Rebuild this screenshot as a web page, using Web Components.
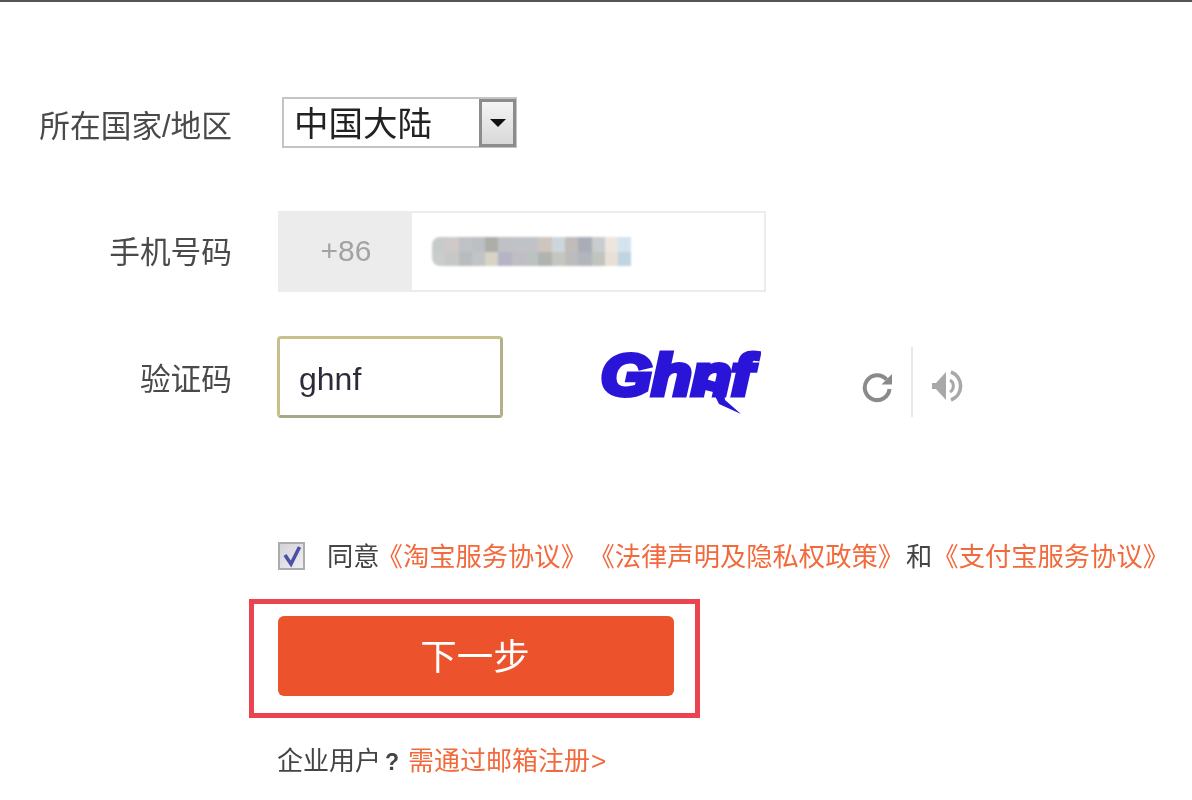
<!DOCTYPE html>
<html lang="zh">
<head>
<meta charset="utf-8">
<title>注册</title>
<style>
  html, body { margin: 0; padding: 0; background: #fff; }
  body {
    font-family: "Liberation Sans", "Noto Sans CJK SC", sans-serif;
    color: #444;
    height: 800px;
    overflow: hidden;
  }
</style>
</head>
<body>
<signup-page>
  <form-row label="所在国家/地区" top="95" height="51" shift="2"><country-select value="中国大陆"></country-select></form-row>
  <form-row label="手机号码" top="63" height="81" shift="-5"><phone-field code="+86"></phone-field></form-row>
  <form-row label="验证码" top="44" height="82" shift="-1"><captcha-field value="ghnf"></captcha-field></form-row>
  <agree-line></agree-line>
  <next-button>下一步</next-button>
  <company-link></company-link>
</signup-page>

<script>
// page frame, the dark line on top is part of the crop
class SignupPage extends HTMLElement {
    constructor() {
        super();
        this.attachShadow({ mode: 'open' });
        this.shadowRoot.innerHTML = `
            <style>
                :host {
                    display: block;
                    border-top: 2px solid #555;
                    filter: blur(0.45px);
                }
            </style>
            <slot></slot>
        `;
    }
}

class FormRow extends HTMLElement {
    constructor() {
        super();
        this.attachShadow({ mode: 'open' });
    }

    connectedCallback() {
        const top = this.getAttribute('top') || 0;
        const height = this.getAttribute('height') || 50;
        const shift = Number(this.getAttribute('shift') || 0);
        this.shadowRoot.innerHTML = `
            <style>
                :host {
                    display: flex;
                    align-items: center;
                    gap: 45px;
                    margin-top: ${top}px;
                    height: ${height}px;
                }
                .label {
                    width: 232px;
                    flex: none;
                    text-align: right;
                    font-size: 30.7px;
                    color: #4a4a4a;
                    white-space: nowrap;
                    padding-top: ${Math.max(shift, 0)}px;
                    padding-bottom: ${Math.max(-shift, 0)}px;
                }
            </style>
            <div class="label">${this.getAttribute('label')}</div>
            <slot></slot>
        `;
    }
}

class CountrySelect extends HTMLElement {
    constructor() {
        super();
        this.attachShadow({ mode: 'open' });
    }

    connectedCallback() {
        this.shadowRoot.innerHTML = `
            <style>
                :host {
                    display: flex;
                    box-sizing: border-box;
                    width: 235px;
                    height: 51px;
                    margin-left: 5px;
                    border: 2px solid #c4c4c4;
                    background: #fff;
                }
                .value {
                    flex: 1;
                    padding-left: 10px;
                    padding-top: 2px;
                    font-size: 34.5px;
                    line-height: 47px;
                    height: 45px;
                    color: #222;
                }
                .arrow {
                    width: 37px;
                    flex: none;
                    margin: 0 -1px -1px 0;
                    box-sizing: border-box;
                    border: 3px solid #8c8c8c;
                    background: linear-gradient(#f4f4f4, #d8d8d8);
                    display: flex;
                    align-items: center;
                    justify-content: center;
                }
                .arrow i {
                    border: 8px solid transparent;
                    border-top: 8px solid #111;
                    border-bottom: 0;
                }
            </style>
            <div class="value">${this.getAttribute('value')}</div>
            <div class="arrow"><i></i></div>
        `;
    }
}

class PhoneField extends HTMLElement {
    constructor() {
        super();
        this.attachShadow({ mode: 'open' });
    }

    connectedCallback() {
        // the number is pixelated out in the original
        const cells = [
            '#c6caca','#cfcac8','#bfc2c6','#bcc0c3','#aeaea8','#bfc1c6','#bfc2c6','#c0c2c6','#cfc5bf','#cdd6dc','#c0bcba','#a9aeb6','#c9cdcf','#ece6de','#d5e3ef',
            '#c9cccb','#c6c8c8','#b9bcbe','#c1c4c5','#d8d3c4','#b4b4c4','#c0bec4','#bcc2c0','#b0b4b0','#c6c6c0','#bcbcbc','#b2b6bc','#c2c4c0','#e8e0d6','#c0d4e2'
        ].map(c => `<b style="background:${c}"></b>`).join('');
        this.shadowRoot.innerHTML = `
            <style>
                :host {
                    display: flex;
                    box-sizing: border-box;
                    width: 488px;
                    height: 81px;
                    margin-left: 1px;
                    border: 2px solid #ececec;
                    background: #fff;
                }
                .code {
                    width: 132px;
                    flex: none;
                    background: #ececec;
                    color: #a3a3a3;
                    font-size: 30px;
                    text-align: center;
                    line-height: 76px;
                }
                .number {
                    display: grid;
                    grid-template-columns: repeat(15, 13.3px);
                    grid-auto-rows: 14.5px;
                    align-content: center;
                    margin-left: 20px;
                    border-radius: 8px 0 0 8px;
                    overflow: hidden;
                    height: 29px;
                    align-self: center;
                    filter: blur(1px);
                }
            </style>
            <div class="code">${this.getAttribute('code')}</div>
            <div class="number" aria-hidden="true">${cells}</div>
        `;
    }
}

class CaptchaField extends HTMLElement {
    constructor() {
        super();
        this.attachShadow({ mode: 'open' });
    }

    connectedCallback() {
        this.shadowRoot.innerHTML = `
            <style>
                :host {
                    display: flex;
                    align-items: center;
                }
                .input {
                    box-sizing: border-box;
                    width: 226px;
                    height: 82px;
                    border: 3px solid #c8c08c;
                    border-right-color: #b4b088;
                    border-bottom-color: #a8a888;
                    border-radius: 4px;
                    padding-left: 19px;
                    font-size: 32px;
                    line-height: 80px;
                    color: #2b2b3a;
                    background: #fff;
                }
                .code { display: block; margin-left: 94px; flex: none; }
                .tools {
                    display: flex;
                    align-items: center;
                    margin-left: 100px;
                    height: 70px;
                    padding-top: 10px;
                }
                .sep { width: 2px; height: 70px; background: #e8e8e8; margin: 0 18px 0 17px; }
                svg.icon { display: block; flex: none; margin-top: 7px; }
            </style>
            <div class="input">${this.getAttribute('value')}</div>
            <svg class="code" width="164" height="78" viewBox="0 0 164 78">
                <path d="M98 38 L126 46 L128 62 L144 76 L122 66 L116 54 L100 50 Z" fill="#2a14d8"/>
                <text x="4" y="57" font-family="Liberation Sans" font-weight="700" font-style="italic"
                      font-size="58" fill="#2a14d8" stroke="#2a14d8" stroke-width="5"
                      textLength="152" lengthAdjust="spacingAndGlyphs">Ghnf</text>
            </svg>
            <div class="tools">
                <svg class="icon" width="33" height="34" viewBox="0 0 33 34">
                    <path d="M25.5 10.5 A12.4 12.4 0 1 0 28.5 20" fill="none" stroke="#8a8a8a" stroke-width="4"/>
                    <path d="M31 5 V15.5 H20.5 Z" fill="#8a8a8a"/>
                </svg>
                <div class="sep"></div>
                <svg class="icon" width="33" height="32" viewBox="0 0 33 32">
                    <path d="M1 13 H5 L15 2 V30 L5 19 H1 Z" fill="#a8a8a8"/>
                    <path d="M20 2 A15 15 0 0 1 20 30" fill="none" stroke="#a8a8a8" stroke-width="3.6"/>
                    <path d="M19 10 A7 7 0 0 1 19 22" fill="none" stroke="#a8a8a8" stroke-width="3"/>
                </svg>
            </div>
        `;
    }
}

class AgreeLine extends HTMLElement {
    constructor() {
        super();
        this.attachShadow({ mode: 'open' });
        this.shadowRoot.innerHTML = `
            <style>
                :host {
                    display: flex;
                    align-items: center;
                    margin: 124px 0 0 278px;
                    height: 28px;
                    font-size: 26.3px;
                    color: #444;
                    white-space: nowrap;
                    text-spacing-trim: space-all;
                }
                .box {
                    box-sizing: border-box;
                    width: 27px;
                    height: 28px;
                    margin-right: 22px;
                    border: 2px solid #acacac;
                    background: linear-gradient(135deg, #d2d2d8, #f0f0f2);
                }
                .box svg { display: block; }
                .text { padding-bottom: 4px; }
                a { color: #f26a3c; text-decoration: none; }
                /* centred brackets, as the original font draws them */
                q { quotes: none; font-family: "Noto Sans CJK TC", sans-serif; }
                .a1 { margin-left: -3px; }
                .a2 { margin-left: 1.5px; }
                .and { margin-left: 2px; }
            </style>
            <span class="box"><svg width="23" height="24" viewBox="0 0 23 24">
                <path d="M5 11 L11 20 L19.5 3" fill="none" stroke="#4a52a8" stroke-width="3.6"/>
            </svg></span>
            <span class="text">同意</span>
            <a class="text a1"><q>《</q>淘宝服务协议<q>》</q></a>
            <a class="text a2"><q>《</q>法律声明及隐私权政策<q>》</q></a>
            <span class="text and">和</span>
            <a class="text"><q>《</q>支付宝服务协议<q>》</q></a>
        `;
    }
}

class NextButton extends HTMLElement {
    constructor() {
        super();
        this.attachShadow({ mode: 'open' });
        this.shadowRoot.innerHTML = `
            <style>
                :host {
                    display: block;
                    box-sizing: border-box;
                    width: 451px;
                    height: 119px;
                    margin: 29px 0 0 249px;
                    border: 5px solid #ec4350;
                    padding: 12px 0 0 24px;
                }
                button {
                    display: block;
                    width: 396px;
                    height: 80px;
                    padding: 0 2px 4px 0;
                    border: 0;
                    border-radius: 6px;
                    background: #ec532c;
                    color: #fff;
                    font: 400 36.5px "Noto Sans CJK SC", sans-serif;
                }
            </style>
            <button><slot></slot></button>
        `;
    }
}

class CompanyLink extends HTMLElement {
    constructor() {
        super();
        this.attachShadow({ mode: 'open' });
        this.shadowRoot.innerHTML = `
            <style>
                :host {
                    display: block;
                    margin: 27px 0 0 277px;
                    font-size: 26px;
                    line-height: 32px;
                    color: #444;
                    white-space: nowrap;
                }
                b { margin: 0 9px 0 4px; font-size: 23px; }
                a { color: #f26a3c; text-decoration: none; }
                i { font-style: normal; margin-left: 1px; }
            </style>
            企业用户<b>?</b><a>需通过邮箱注册<i>&gt;</i></a>
        `;
    }
}

customElements.define('signup-page', SignupPage);
customElements.define('form-row', FormRow);
customElements.define('country-select', CountrySelect);
customElements.define('phone-field', PhoneField);
customElements.define('captcha-field', CaptchaField);
customElements.define('agree-line', AgreeLine);
customElements.define('next-button', NextButton);
customElements.define('company-link', CompanyLink);
</script>
</body>
</html>
